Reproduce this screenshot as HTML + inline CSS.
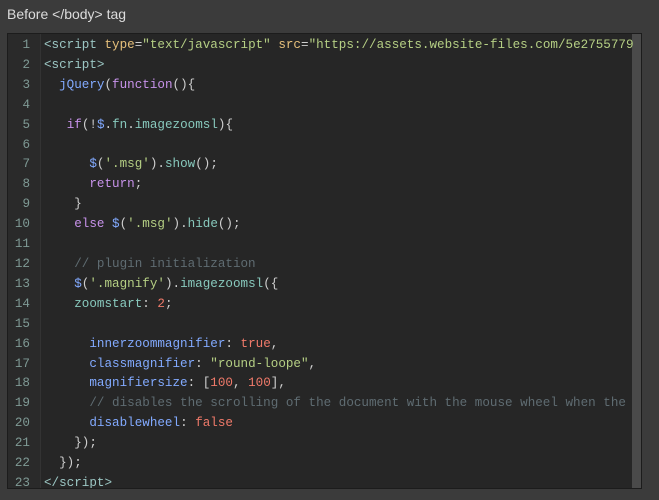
<!DOCTYPE html>
<html><head><style>
body{margin:0;width:659px;height:500px;background:#3b3b3b;overflow:hidden;font-family:"Liberation Sans",sans-serif}
.lbl{position:absolute;left:7px;top:6px;font-size:14px;color:#dcdcdc}
.ed{position:absolute;left:7px;top:33px;width:635px;height:456px;background:#262626;border:1px solid #1c1c1c;box-sizing:border-box;overflow:hidden}
.gut{position:absolute;left:0;top:0;width:32px;height:100%;background:#2a2a2a;border-right:1px solid #333}
.sb{position:absolute;right:0;top:0;width:9px;height:100%;background:#4a4a4a}
pre{margin:0;position:absolute;top:2px;left:0;font-family:"Liberation Mono",monospace;font-size:12.6px;line-height:19.9px;white-space:pre;color:#cfcfcf}
.n{position:absolute;left:0;width:22px;text-align:right;color:#7f9a95}
.c{left:36px}
.t{color:#9cc7c4}.a{color:#e6c07b}.s{color:#b5cf84}.f{color:#82aaff}.k{color:#c792ea}.p{color:#cfcfcf}.m{color:#88c9bd}.num{color:#f07a6a}.cm{color:#5f6c72}.pr{color:#82aaff}
</style></head><body>
<div class="lbl">Before &lt;/body&gt; tag</div>
<div class="ed"><div class="gut"></div><div class="sb"></div>
<pre class="n">1
2
3
4
5
6
7
8
9
10
11
12
13
14
15
16
17
18
19
20
21
22
23</pre>
<pre class="c"><span class="t">&lt;script</span> <span class="a">type</span>=<span class="s">"text/javascript"</span> <span class="a">src</span>=<span class="s">"https://assets.website-files.com/5e2755779</span>
<span class="t">&lt;script&gt;</span>
  <span class="f">jQuery</span>(<span class="k">function</span>(){

   <span class="k">if</span>(!<span class="f">$</span>.<span class="m">fn</span>.<span class="m">imagezoomsl</span>){

      <span class="f">$</span>(<span class="s">'.msg'</span>).<span class="m">show</span>();
      <span class="k">return</span>;
    }
    <span class="k">else</span> <span class="f">$</span>(<span class="s">'.msg'</span>).<span class="m">hide</span>();

    <span class="cm">// plugin initialization</span>
    <span class="f">$</span>(<span class="s">'.magnify'</span>).<span class="m">imagezoomsl</span>({
    <span class="m">zoomstart</span>: <span class="num">2</span>;

      <span class="pr">innerzoommagnifier</span>: <span class="num">true</span>,
      <span class="pr">classmagnifier</span>: <span class="s">"round-loope"</span>,
      <span class="pr">magnifiersize</span>: [<span class="num">100</span>, <span class="num">100</span>],
      <span class="cm">// disables the scrolling of the document with the mouse wheel when the</span>
      <span class="pr">disablewheel</span>: <span class="num">false</span>
    });
  });
<span class="t">&lt;/script&gt;</span></pre>
</div>
</body></html>
